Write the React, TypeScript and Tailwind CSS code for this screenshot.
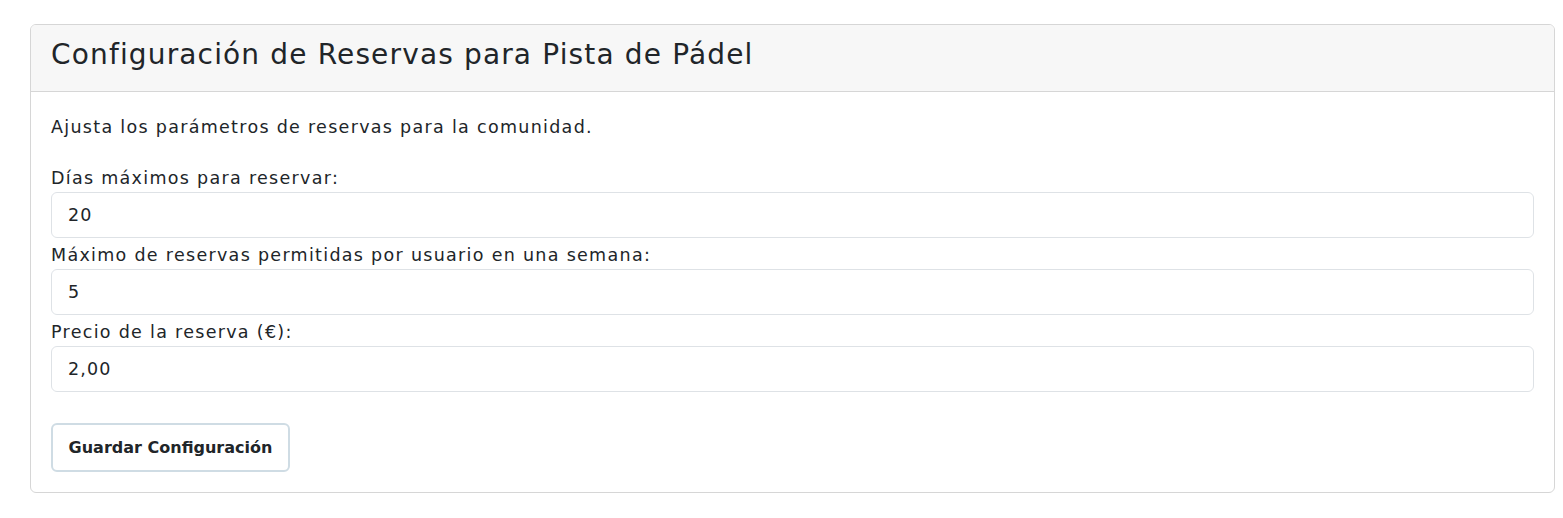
import React, { useState } from 'react';

const font = { fontFamily: '"DejaVu Sans", "Liberation Sans", sans-serif' };

const Field: React.FC<{ label: string; value: string; onChange: (v: string) => void }> = ({ label, value, onChange }) => (
  <div>
    <label className="block h-[27px] text-[17.5px] leading-[27px] tracking-[1.3px] text-[#212529]">{label}</label>
    <input
      type="text"
      value={value}
      onChange={(e) => onChange(e.target.value)}
      className="block h-[46px] w-full rounded-md border border-[#dee2e6] bg-white px-4 text-[17.5px] tracking-[1.1px] text-[#212529] outline-none"
    />
  </div>
);

export default function App() {
  const [dias, setDias] = useState('20');
  const [maxReservas, setMaxReservas] = useState('5');
  const [precio, setPrecio] = useState('2,00');

  return (
    <div className="min-h-[518px] bg-white pt-6 pl-[30px]" style={font}>
      <div className="w-[1525px] overflow-hidden rounded-md border border-[#d6d6d6]">
        <div className="flex h-[67px] items-center border-b border-[#d6d6d6] bg-[#f7f7f7] px-5 pb-[6px]">
          <h1 className="text-[28px] font-normal tracking-[1.15px] text-[#212529]">
            Configuración de Reservas para Pista de Pádel
          </h1>
        </div>
        <div className="px-5 pt-[22px] pb-[20px]">
          <p className="mb-[24px] h-[27px] text-[17.5px] leading-[27px] tracking-[1.3px] text-[#212529]">
            Ajusta los parámetros de reservas para la comunidad.
          </p>
          <Field label="Días máximos para reservar:" value={dias} onChange={setDias} />
          <div className="mt-[4px]" />
          <Field label="Máximo de reservas permitidas por usuario en una semana:" value={maxReservas} onChange={setMaxReservas} />
          <div className="mt-[4px]" />
          <Field label="Precio de la reserva (€):" value={precio} onChange={setPrecio} />
          <button className="mt-[31px] h-[49px] w-[239px] rounded-md border-2 border-[#cfdce4] bg-white text-[16px] font-semibold text-[#212529]">
            Guardar Configuración
          </button>
        </div>
      </div>
    </div>
  );
}
